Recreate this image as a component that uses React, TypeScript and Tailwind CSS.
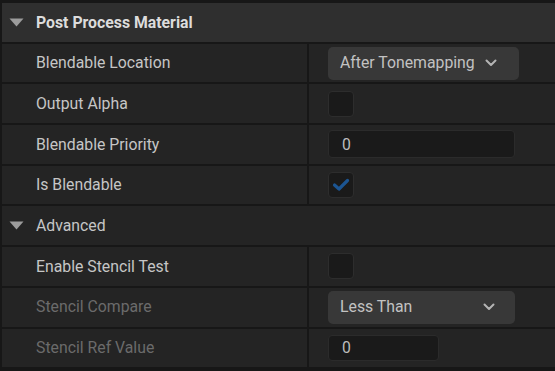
import React from 'react';

const Chevron = () => (
  <svg width="12" height="8" viewBox="0 0 12 8" fill="none">
    <path d="M1.5 1.5 L6 6 L10.5 1.5" stroke="#b4b4b4" strokeWidth="2" strokeLinecap="round" strokeLinejoin="round" />
  </svg>
);

const Caret = () => (
  <svg width="15" height="9" viewBox="0 0 15 9" className="shrink-0">
    <path d="M0.5 0.5 H14.5 L7.5 8.5 Z" fill="#9c9c9c" />
  </svg>
);

const Checkbox = ({ checked = false }: { checked?: boolean }) => (
  <div className="flex h-[26px] w-[26px] items-center justify-center rounded-[4px] border border-[#2d2d2d] bg-[#1a1a1a]">
    {checked && (
      <svg width="18" height="14" viewBox="0 0 18 14" fill="none">
        <path d="M2.5 7 L7 11 L15.5 2.5" stroke="#1c5592" strokeWidth="3.2" strokeLinecap="round" strokeLinejoin="round" />
      </svg>
    )}
  </div>
);

const Dropdown = ({ text, width, spread }: { text: string; width: string; spread?: boolean }) => (
  <div className={`flex h-[33px] items-center rounded-[5px] bg-[#383838] pl-[12px] pr-[20px] ${width} ${spread ? 'justify-between' : 'gap-[10px]'}`}>
    <span className="text-[#c2c2c2]">{text}</span>
    <Chevron />
  </div>
);

const NumberBox = ({ width, height }: { width: string; height: string }) => (
  <div className={`flex items-center rounded-[4px] border border-[#2b2b2b] bg-[#1a1a1a] pl-[13px] text-[#bdbdbd] ${width} ${height}`}>
    0
  </div>
);

const Row = ({ label, dim, children }: { label: string; dim?: boolean; children?: React.ReactNode }) => (
  <div className="flex h-[38.7px] gap-[2px]">
    <div className={`flex w-[305px] items-center bg-[#242424] pl-[34px] ${dim ? 'text-[#6b6b6b]' : 'text-[#c6c6c6]'}`}>
      {label}
    </div>
    <div className="flex flex-1 items-center bg-[#242424] pl-[19px]">{children}</div>
  </div>
);

const Category = ({ label, bold, light }: { label: string; bold?: boolean; light?: boolean }) => (
  <div className={`flex h-[38.7px] items-center gap-[12px] pl-[7px] ${light ? 'bg-[#2f2f2f]' : 'bg-[#242424]'}`}>
    <Caret />
    <span className={bold ? 'font-bold text-[#dcdcdc]' : 'text-[#c6c6c6]'}>{label}</span>
  </div>
);

export default function App() {
  return (
    <div className="flex h-[371px] w-[555px] flex-col gap-[2px] overflow-hidden bg-[#171717] pl-[2px] pt-[3px] font-['Roboto',sans-serif] text-[15.8px]">
      <Category label="Post Process Material" bold light />
      <Row label="Blendable Location">
        <Dropdown text="After Tonemapping" width="w-[191px]" />
      </Row>
      <Row label="Output Alpha">
        <Checkbox />
      </Row>
      <Row label="Blendable Priority">
        <NumberBox width="w-[187px]" height="h-[28px]" />
      </Row>
      <Row label="Is Blendable">
        <Checkbox checked />
      </Row>
      <Category label="Advanced" />
      <Row label="Enable Stencil Test">
        <Checkbox />
      </Row>
      <Row label="Stencil Compare" dim>
        <Dropdown text="Less Than" width="w-[187px]" spread />
      </Row>
      <Row label="Stencil Ref Value" dim>
        <NumberBox width="w-[111px]" height="h-[26px]" />
      </Row>
    </div>
  );
}
